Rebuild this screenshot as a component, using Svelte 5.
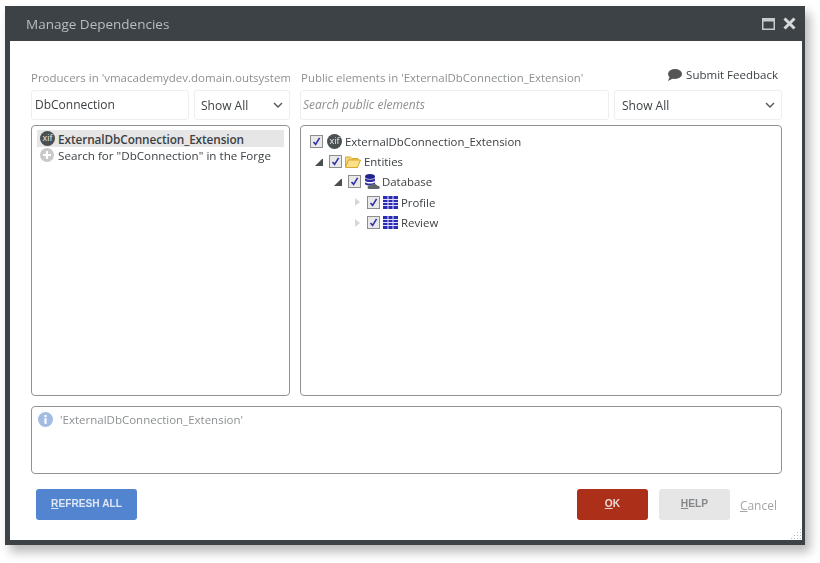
<script lang="ts">
  const nodes = [
    { label: 'Entities', depth: 1, icon: 'folder', arrow: 'open' },
    { label: 'Database', depth: 2, icon: 'db', arrow: 'open' },
    { label: 'Profile', depth: 3, icon: 'table', arrow: 'closed' },
    { label: 'Review', depth: 3, icon: 'table', arrow: 'closed' }
  ];
</script>

{#snippet check()}
  <span class="check">
    <svg width="9" height="9" viewBox="0 0 9 9"><path d="M1.5 5 L3.6 7.4 L7.6 0.8" fill="none" stroke="#3131a8" stroke-width="1.6" /></svg>
  </span>
{/snippet}

{#snippet xif()}
  <span class="xif">xif</span>
{/snippet}

{#snippet chevron()}
  <svg class="chevron" width="10" height="6" viewBox="0 0 10 6"><path d="M1 1 L5 5 L9 1" fill="none" stroke="#555" stroke-width="1.4" /></svg>
{/snippet}

<div class="page">
  <div class="window">
    <header class="titlebar">
      <span class="title">Manage Dependencies</span>
      <div class="controls">
        <svg width="13" height="12" viewBox="0 0 13 12"><rect x="0.75" y="0.75" width="11.5" height="10.5" fill="none" stroke="#c9cccd" stroke-width="1.5" /><rect x="0" y="0" width="13" height="3.5" fill="#c9cccd" /></svg>
        <svg width="13" height="13" viewBox="0 0 13 13"><path d="M1.5 1.5 L11.5 11.5 M11.5 1.5 L1.5 11.5" stroke="#d6d8d9" stroke-width="3" /></svg>
      </div>
    </header>

    <main class="content">
      <div class="columns">
        <section class="col">
          <div class="label-row"><span class="label clip">Producers in 'vmacademydev.domain.outsystems.net'</span></div>
          <div class="filter-row">
            <div class="input left-input">DbConnection</div>
            <div class="select small">Show All {@render chevron()}</div>
          </div>
          <div class="panel">
            <div class="producer selected">{@render xif()}<strong>ExternalDbConnection_Extension</strong></div>
            <div class="producer">
              <svg width="14" height="14" viewBox="0 0 14 14"><circle cx="7" cy="7" r="7" fill="#c9c9c9" /><path d="M7 3 V11 M3 7 H11" stroke="#fff" stroke-width="2.2" /></svg>
              <span>Search for "DbConnection" in the Forge</span>
            </div>
          </div>
        </section>

        <section class="col">
          <div class="label-row">
            <span class="label public">Public elements in 'ExternalDbConnection_Extension'</span>
            <span class="feedback">
              <svg width="15" height="12" viewBox="0 0 15 12"><ellipse cx="8" cy="5" rx="7" ry="5" fill="#555" /><path d="M3 7 L1 12 L7 9 Z" fill="#555" /></svg>
              Submit Feedback
            </span>
          </div>
          <div class="filter-row">
            <div class="input search">Search public elements</div>
            <div class="select large">Show All {@render chevron()}</div>
          </div>
          <div class="panel tree">
            <div class="node root">{@render check()}{@render xif()}<span>ExternalDbConnection_Extension</span></div>
            {#each nodes as node}
              <div class="node depth-{node.depth}">
                <span class="arrow {node.arrow}"></span>
                {@render check()}
                {#if node.icon === 'folder'}
                  <svg width="16" height="13" viewBox="0 0 16 13"><path d="M0.5 2 H5.5 L7 3.5 H13 V5 H3.5 L0.5 12 Z" fill="#f4d77e" stroke="#d9a92c" /><path d="M0.5 12.5 L3.5 5 H15.5 L12.5 12.5 Z" fill="#fbe08a" stroke="#d9a92c" /></svg>
                {:else if node.icon === 'db'}
                  <svg class="db" width="17" height="15" viewBox="0 0 17 15"><ellipse cx="6" cy="2.5" rx="5" ry="2.5" fill="#23238f" /><path d="M1 4 C2 6 10 6 11 4 V6.5 C10 8.5 2 8.5 1 6.5 Z" fill="#2c2ca6" /><path d="M1 8 C2 10 10 10 11 8 V10 C10 12 2 12 1 10 Z" fill="#2c2ca6" /><path d="M5 15 C3 15 3 11.5 6 11.5 C7 9 12 9 13 11.5 C16 11.5 17 15 14 15 Z" fill="#5d676c" /></svg>
                {:else}
                  <svg width="15" height="13" viewBox="0 0 15 13"><path d="M0 0 H15 V13 H0 Z" fill="#2b2bb5" /><path d="M0 3.5 H15 M0 6.5 H15 M0 9.5 H15 M5 0 V13 M10 0 V13" stroke="#dfe0f5" stroke-width="1" /></svg>
                {/if}
                <span>{node.label}</span>
              </div>
            {/each}
          </div>
        </section>
      </div>

      <div class="info">
        <svg width="15" height="15" viewBox="0 0 15 15"><circle cx="7.5" cy="7.5" r="7.5" fill="#a3bce3" /><rect x="6.4" y="6.2" width="2.2" height="5.6" fill="#fff" /><rect x="6.4" y="3" width="2.2" height="2.2" fill="#fff" /></svg>
        <span>'ExternalDbConnection_Extension'</span>
      </div>

      <footer class="actions">
        <button class="btn refresh"><u>R</u>EFRESH ALL</button>
        <div class="right-actions">
          <button class="btn ok"><u>O</u>K</button>
          <button class="btn help"><u>H</u>ELP</button>
          <span class="cancel"><u>C</u>ancel</span>
        </div>
      </footer>

      <svg class="grip" width="12" height="12" viewBox="0 0 12 12" fill="#b5b9bb">
        <rect x="10" y="1" width="1" height="1" /><rect x="10" y="4" width="1" height="1" /><rect x="10" y="7" width="1" height="1" /><rect x="10" y="10" width="1" height="1" />
        <rect x="7" y="4" width="1" height="1" /><rect x="7" y="7" width="1" height="1" /><rect x="7" y="10" width="1" height="1" />
        <rect x="4" y="7" width="1" height="1" /><rect x="4" y="10" width="1" height="1" /><rect x="1" y="10" width="1" height="1" />
      </svg>
    </main>
  </div>
</div>

<style>
  :global(body) {
    background: #fff;
    font-family: "Open Sans", "Liberation Sans", sans-serif;
    font-size: 12px;
    color: #3d4144;
  }

  .page {
    box-sizing: border-box;
    height: 563px;
    padding: 6px 15px 18px 5px;
    overflow: hidden;
  }

  .window {
    width: 800px;
    height: 539px;
    display: flex;
    flex-direction: column;
    background: #3c4245;
    box-shadow: 5px 7px 10px rgba(0, 0, 0, 0.28);
    filter: blur(0.5px);
  }

  .titlebar {
    height: 35px;
    flex: none;
    display: flex;
    align-items: center;
    justify-content: space-between;
    padding: 0 8px 0 21px;
    color: #b9bdbf;
  }

  .title {
    font-size: 13.5px;
  }

  .controls {
    display: flex;
    align-items: center;
    gap: 8px;
    margin-right: 1px;
  }

  .content {
    position: relative;
    flex: 1;
    margin: 0 3px 5px 5px;
    padding: 28px 20px 0 21px;
    background: #fff;
    display: flex;
    flex-direction: column;
  }

  .columns {
    display: grid;
    grid-template-columns: 259px 482px;
    gap: 10px;
  }

  .col {
    min-width: 0;
    display: flex;
    flex-direction: column;
  }

  .label-row {
    height: 21px;
    display: flex;
    align-items: flex-start;
    justify-content: space-between;
    white-space: nowrap;
  }

  .label {
    color: #8d9092;
    font-size: 11.5px;
    line-height: 18px;
  }

  .public {
    padding-left: 1px;
    font-size: 11.45px;
  }

  .clip {
    display: block;
    width: 259px;
    overflow: hidden;
  }

  .feedback {
    display: flex;
    align-items: center;
    gap: 4px;
    font-size: 11.5px;
    line-height: 14px;
    margin-right: 4px;
    margin-top: -1px;
  }

  .filter-row {
    display: flex;
    gap: 5px;
    height: 30px;
  }

  .input,
  .select {
    box-sizing: border-box;
    border: 1px solid #eeeeee;
    border-radius: 3px;
    display: flex;
    align-items: center;
    padding: 0 3px 2px;
    font-size: 12px;
  }

  .left-input {
    width: 158px;
  }

  .search {
    width: 309px;
    color: #8d9092;
    font-style: italic;
    padding-left: 2px;
  }

  .select {
    justify-content: space-between;
    padding: 0 6px;
  }

  .small {
    width: 96px;
  }

  .large {
    width: 168px;
    padding-left: 7px;
  }

  .panel {
    box-sizing: border-box;
    height: 271px;
    margin-top: 5px;
    border: 1px solid #8f9395;
    border-radius: 4px;
    padding: 4px 5px;
  }

  .producer {
    height: 16px;
    display: flex;
    align-items: center;
    gap: 4px;
    padding-left: 3px;
    white-space: nowrap;
    font-size: 11.65px;
  }

  .selected {
    background: #e6e6e6;
    height: 17px;
  }

  .producer strong {
    font-weight: 600;
    letter-spacing: -0.1px;
    font-size: 11.8px;
  }

  .xif {
    width: 15px;
    height: 15px;
    margin-right: -1px;
    border-radius: 50%;
    background: #4a4f52;
    color: #eee;
    font-size: 9px;
    line-height: 14px;
    text-align: center;
    flex: none;
  }

  .tree {
    padding: 5px 9px;
    font-size: 11.4px;
  }

  .node {
    height: 20.4px;
    display: flex;
    align-items: center;
    gap: 3px;
    white-space: nowrap;
  }

  .root {
    gap: 4px;
  }

  .depth-1 {
    padding-left: 5px;
  }

  .depth-2 {
    padding-left: 24px;
  }

  .depth-3 {
    padding-left: 43px;
  }

  .arrow {
    width: 8px;
    height: 8px;
    flex: none;
    margin-right: 3px;
    box-sizing: border-box;
  }

  .arrow.open {
    border-bottom: 7px solid #4a4f52;
    border-left: 7px solid transparent;
  }

  .arrow.closed {
    height: 0;
    width: 0;
    margin-left: 2px;
    margin-right: 4px;
    border-left: 5px solid #d5d7d8;
    border-top: 4px solid transparent;
    border-bottom: 4px solid transparent;
  }

  .db {
    margin-right: -2px;
  }

  .check {
    box-sizing: border-box;
    width: 13px;
    height: 13px;
    flex: none;
    border: 1px solid #8d8d8d;
    background: #e9e9e9;
    display: flex;
    align-items: center;
    justify-content: center;
  }

  .info {
    box-sizing: border-box;
    height: 68px;
    margin-top: 10px;
    border: 1px solid #8f9395;
    border-radius: 4px;
    padding: 5px 6px;
    display: flex;
    align-items: flex-start;
    gap: 7px;
    color: #8d9092;
    font-size: 11.5px;
    line-height: 15px;
  }

  .actions {
    margin-top: 15px;
    padding-left: 5px;
    display: flex;
    justify-content: space-between;
    align-items: center;
  }

  .right-actions {
    display: flex;
    align-items: center;
    gap: 11px;
    padding-right: 5px;
  }

  .btn {
    height: 31px;
    border: 0;
    border-radius: 3px;
    font-family: "Liberation Sans", sans-serif;
    font-size: 10.2px;
    font-weight: 700;
    padding: 0 0 2px;
  }

  .refresh {
    width: 101px;
    background: #5384cf;
    color: #dde7f5;
  }

  .ok {
    width: 71px;
    background: #ab2f19;
    color: #eed9d4;
  }

  .help {
    width: 71px;
    background: #e6e6e6;
    color: #85888a;
  }

  .cancel {
    color: #a2a5a7;
    font-size: 12px;
    margin-left: -1px;
    padding-top: 1px;
  }

  .grip {
    position: absolute;
    right: 0;
    bottom: 0;
  }
</style>
